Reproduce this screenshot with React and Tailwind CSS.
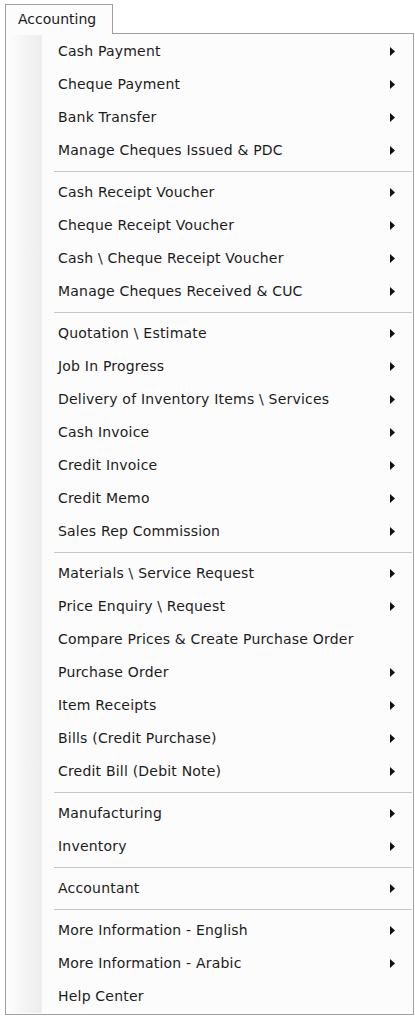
const groups = [
  [
    ['Cash Payment', true],
    ['Cheque Payment', true],
    ['Bank Transfer', true],
    ['Manage Cheques Issued & PDC', true],
  ],
  [
    ['Cash Receipt Voucher', true],
    ['Cheque Receipt Voucher', true],
    ['Cash \\ Cheque Receipt Voucher', true],
    ['Manage Cheques Received & CUC', true],
  ],
  [
    ['Quotation \\ Estimate', true],
    ['Job In Progress', true],
    ['Delivery of Inventory Items \\ Services', true],
    ['Cash Invoice', true],
    ['Credit Invoice', true],
    ['Credit Memo', true],
    ['Sales Rep Commission', true],
  ],
  [
    ['Materials \\ Service Request', true],
    ['Price Enquiry \\ Request', true],
    ['Compare Prices & Create Purchase Order', false],
    ['Purchase Order', true],
    ['Item Receipts', true],
    ['Bills (Credit Purchase)', true],
    ['Credit Bill (Debit Note)', true],
  ],
  [
    ['Manufacturing', true],
    ['Inventory', true],
  ],
  [['Accountant', true]],
  [
    ['More Information - English', true],
    ['More Information - Arabic', true],
    ['Help Center', false],
  ],
]

const Arrow = () => (
  <svg width="5" height="9" viewBox="0 0 5 9" className="shrink-0">
    <path d="M0 0 L5 4.5 L0 9 Z" fill="#111" />
  </svg>
)

export default function App() {
  return (
    <div className="min-h-screen bg-white pt-[4px] pl-[5px] font-['DejaVu_Sans',Verdana,sans-serif] text-[14px] tracking-[0.2px] text-[#1b1b1b]">
      {/* Tab */}
      <div className="relative z-10 -mb-px flex h-[30px] w-[108px] items-center border border-b-0 border-[#a0a0a0] bg-[#fcfcfc] pl-[12px] tracking-normal">
        Accounting
      </div>

      {/* Menu */}
      <div className="flex w-[409px] border border-[#a0a0a0] bg-[#fcfcfc] py-px">
        <div className="ml-[6px] w-[30px] shrink-0 bg-[linear-gradient(to_right,#fafafa,#ededed)]" />
        <div className="flex-1">
          {groups.map((items, gi) => (
            <div key={gi}>
              {gi > 0 && (
                <div className="flex h-[9px] items-center pl-[12px] pr-[1px]">
                  <div className="h-px w-full bg-[#c6c6c6]" />
                </div>
              )}
              {items.map(([label, sub]) => (
                <div key={label} className="flex h-[33px] items-center justify-between pl-[16px] pr-[18px]">
                  <span className="whitespace-pre">{label}</span>
                  {sub && <Arrow />}
                </div>
              ))}
            </div>
          ))}
        </div>
      </div>
    </div>
  )
}
